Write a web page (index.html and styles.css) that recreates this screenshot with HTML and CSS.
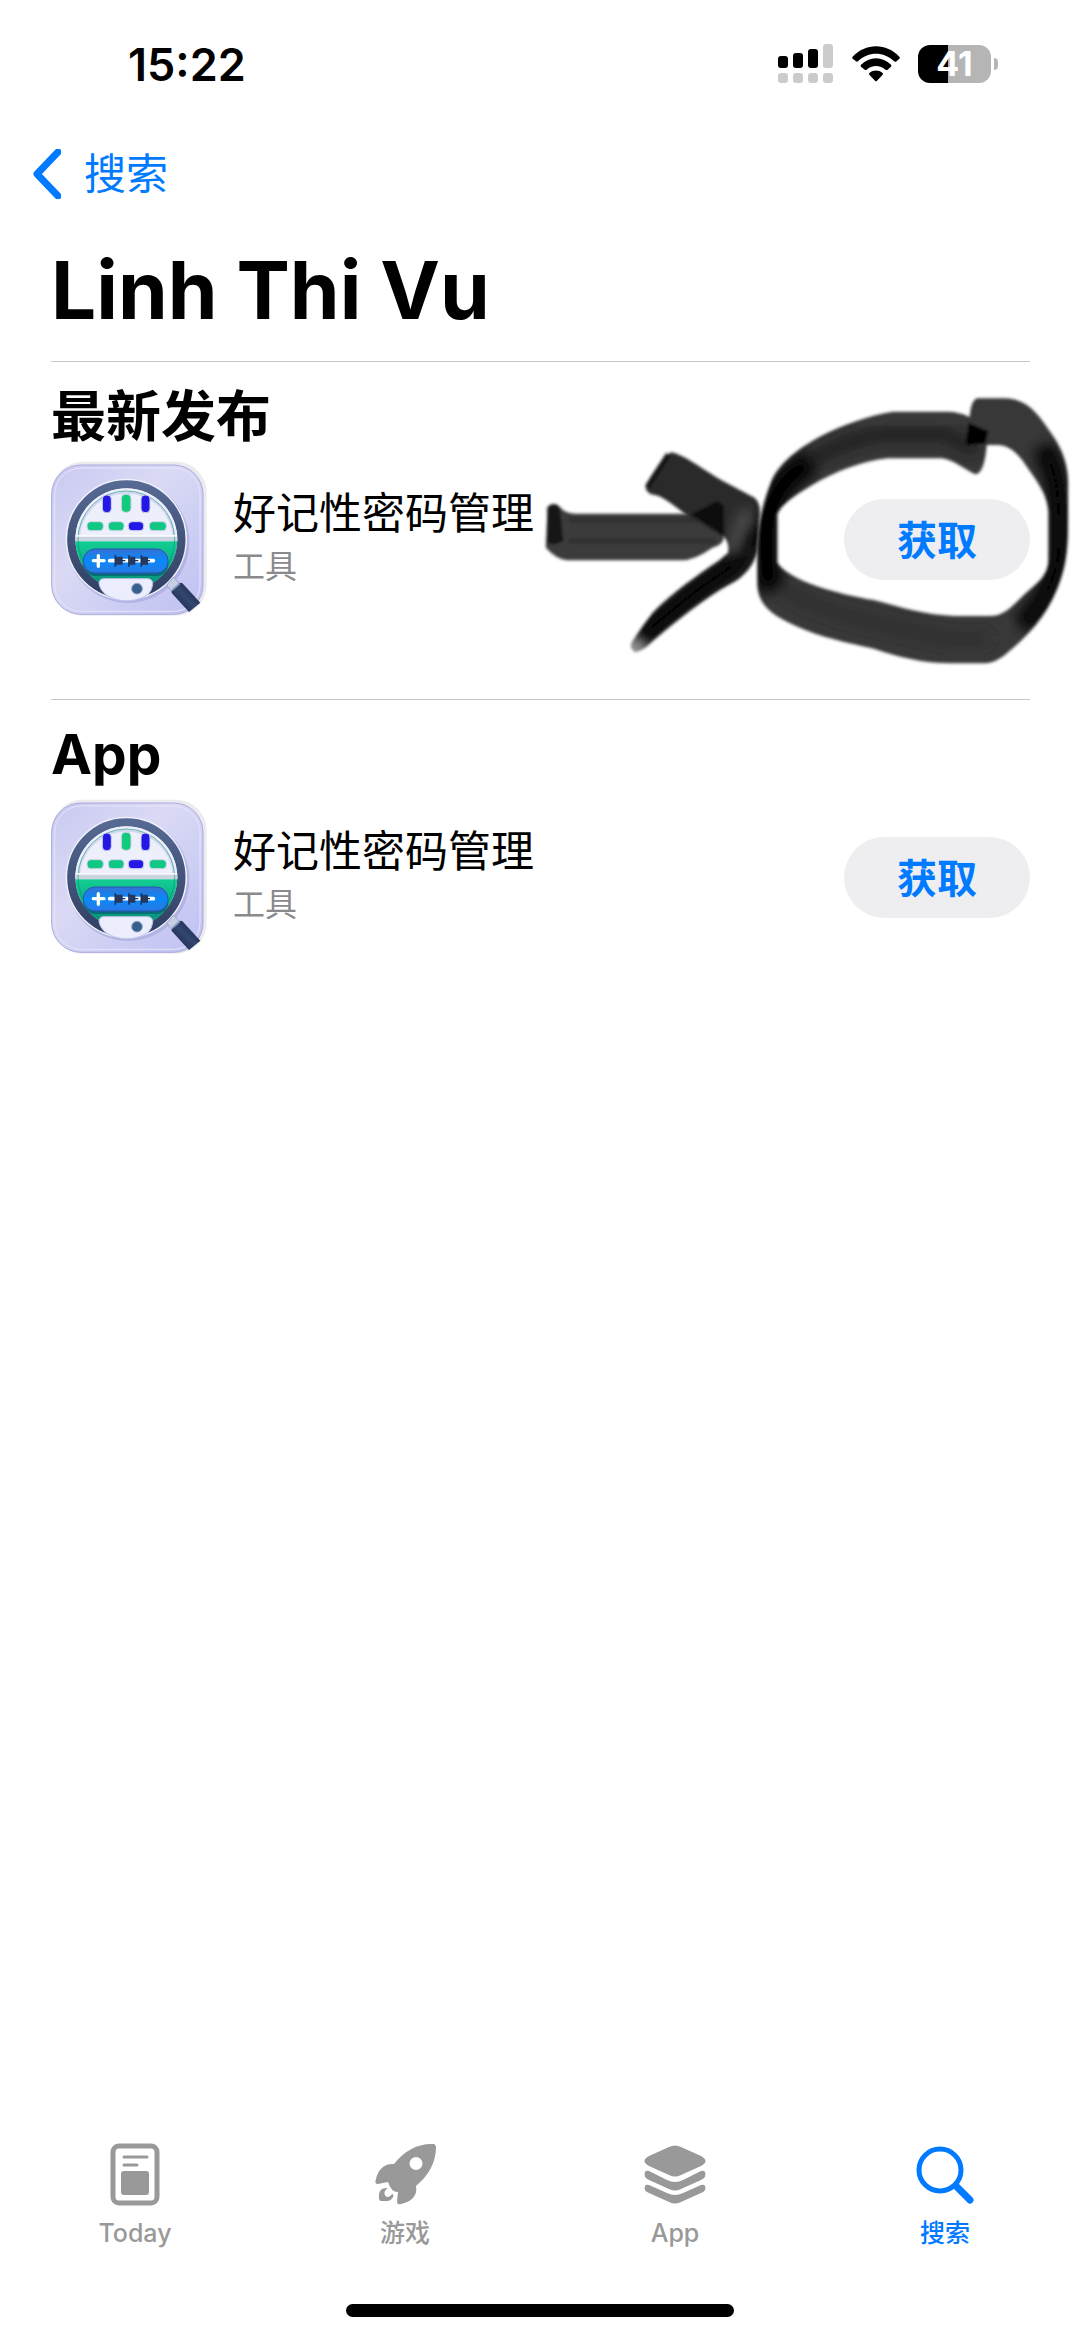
FILE: index.html
```html
<!DOCTYPE html>
<html lang="zh-CN">
<head>
    <meta charset="UTF-8">
    <meta name="viewport" content="width=device-width, initial-scale=1.0">
    <title>Linh Thi Vu</title>
    <link rel="stylesheet" href="styles.css">
</head>
<body>
    <!-- shared app icon -->
    <svg class="defs" width="0" height="0" aria-hidden="true">
        <defs>
            <linearGradient id="tile" x1="0" y1="0" x2="1" y2="1">
                <stop offset="0" stop-color="#c9c9f2"/>
                <stop offset="0.4" stop-color="#dadaf5"/>
                <stop offset="1" stop-color="#bfc0f2"/>
            </linearGradient>
            <linearGradient id="ring" x1="0" y1="0" x2="0" y2="1">
                <stop offset="0" stop-color="#566993"/>
                <stop offset="1" stop-color="#303f63"/>
            </linearGradient>
            <linearGradient id="green" x1="0" y1="0" x2="0" y2="1">
                <stop offset="0" stop-color="#12cf92"/>
                <stop offset="1" stop-color="#078577"/>
            </linearGradient>
            <linearGradient id="blue" x1="0" y1="0" x2="0" y2="1">
                <stop offset="0" stop-color="#3472d4"/>
                <stop offset="0.5" stop-color="#0989fa"/>
                <stop offset="1" stop-color="#2a78e4"/>
            </linearGradient>
            <linearGradient id="handle" x1="0" y1="1" x2="1" y2="0">
                <stop offset="0" stop-color="#131d3c"/>
                <stop offset="0.5" stop-color="#33466f"/>
                <stop offset="1" stop-color="#141e3e"/>
            </linearGradient>
            <clipPath id="lens"><circle cx="259" cy="271" r="153"/></clipPath>
        </defs>
        <symbol id="app-icon" viewBox="33 36 468 468">
            <rect x="36" y="38" width="464" height="462" rx="92" fill="#ecebef"/>
            <rect x="35" y="48" width="454" height="448" rx="88" fill="url(#tile)" stroke="#aaaade" stroke-width="3"/>
            <rect x="44" y="57" width="436" height="430" rx="80" fill="none" stroke="#e6e5fb" stroke-width="3"/>
            <circle cx="264" cy="278" r="184" fill="#8f90cf" opacity="0.4"/>
            <circle cx="259" cy="271" r="182" fill="#f1f1fc"/>
            <circle cx="259" cy="271" r="165" fill="#edf0fb" stroke="url(#ring)" stroke-width="25"/>
            <g clip-path="url(#lens)">
                <rect x="100" y="115" width="320" height="160" fill="#edeffb"/>
                <circle cx="259" cy="273" r="142" fill="none" stroke="#d3d7ef" stroke-width="6"/>
                <rect x="100" y="262" width="320" height="15" fill="#cbd5df"/>
                <rect x="100" y="277" width="320" height="155" fill="url(#green)"/>
                <circle cx="259" cy="271" r="145" fill="none" stroke="#0a8c7e" stroke-width="3" opacity="0.6"/>
                <rect x="100" y="258" width="320" height="5" fill="#f7f9ff"/>
                <rect x="129" y="305" width="256" height="76" rx="36" fill="#076d78"/>
            </g>
            <rect x="130" y="300" width="254" height="72" rx="35" fill="url(#blue)" stroke="#2657b5" stroke-width="3"/>
            <g stroke="#d3d4ed" stroke-width="3">
                <rect x="187" y="138" width="27" height="53" rx="12" fill="#2419e4"/>
                <rect x="244" y="136" width="29" height="54" rx="12" fill="#10cb7c"/>
                <rect x="303" y="138" width="27" height="53" rx="12" fill="#2419e4"/>
                <rect x="141" y="218" width="49" height="27" rx="11" fill="#10c884"/>
                <rect x="205" y="218" width="47" height="27" rx="11" fill="#10c884"/>
                <rect x="265" y="218" width="46" height="27" rx="11" fill="#2318e5"/>
                <rect x="328" y="218" width="51" height="27" rx="11" fill="#10c884"/>
            </g>
            <path d="M175 320v32M160 335h32" stroke="#fff" stroke-width="10" stroke-linecap="round"/>
            <path d="M209 335h131" stroke="#fff" stroke-width="11" stroke-linecap="round"/>
            <path d="M226 319v34M267 319v34M304 319v34" stroke="#173264" stroke-width="5"/>
            <path d="M227 323h21v24h-21zM268 323h18v24h-18zM305 323h19v24h-19z" fill="#26395c"/>
            <path d="M243 335h13M282 335h13M320 335h10" stroke="#173264" stroke-width="4"/>
            <path d="M190 389H325Q339 391 338 407Q336 423 326 434C287 463 229 462 193 433Q179 419 177 404Q177 390 190 389Z" fill="#eceefd" stroke="#bdc4e6" stroke-width="3"/>
            <circle cx="291" cy="419" r="16" fill="#38608d" stroke="#8ba0cc" stroke-width="3"/>
            <path d="M380 408L401 384L421 407L397 430Z" fill="#c7cde2" stroke="#98a5c8" stroke-width="3"/>
            <path d="M395 427L418 403Q424 399 430 406L481 461Q464 475 447 489L395 432Z" fill="url(#handle)"/>
            <path d="M397 423L419 404" stroke="#8598bf" stroke-width="5"/>
        </symbol>
    </svg>

    <header class="status-bar">
        <time class="clock">15:22</time>
        <div class="status-icons">
            <svg class="signal" viewBox="0 0 56 40" aria-hidden="true">
                <g fill="#000">
                    <rect x="0" y="12" width="10" height="12" rx="3"/>
                    <rect x="15" y="9" width="10" height="15" rx="3"/>
                    <rect x="30" y="5" width="10" height="19" rx="3"/>
                </g>
                <g fill="#cbcbcb">
                    <rect x="45" y="0" width="10" height="24" rx="3"/>
                    <rect x="0" y="29" width="10" height="10" rx="3"/>
                    <rect x="15" y="29" width="10" height="10" rx="3"/>
                    <rect x="30" y="29" width="10" height="10" rx="3"/>
                    <rect x="45" y="29" width="10" height="10" rx="3"/>
                </g>
            </svg>
            <svg class="wifi" viewBox="0 0 144 108" aria-hidden="true">
                <path d="M2 32C40-10 104-10 142 32Q145 35 142 38L132 47Q129 48 126 46C96 16 48 16 18 46Q15 48 12 46L2 38Q-1 35 2 32Z"/>
                <path d="M27 56C52 30 92 30 117 56Q120 60 117 62L106 72Q103 73 100 71C84 56 60 56 44 71Q41 73 38 71L27 62Q24 60 27 56Z"/>
                <path d="M53 80C64 71 80 71 91 80Q95 83 92 86L75 104Q72 107 69 104L52 86Q49 83 53 80Z"/>
            </svg>
            <div class="battery"><span class="battery-level">41</span></div>
        </div>
    </header>

    <nav class="nav">
        <a class="back" href="#search">
            <svg class="chevron" viewBox="0 0 28 50" aria-hidden="true">
                <path d="M25 3L4 25L25 47"/>
            </svg>
            搜索
        </a>
    </nav>

    <main class="content">
        <h1>Linh Thi Vu</h1>

        <section class="section">
            <h2>最新发布</h2>
            <div class="app-row">
                <svg class="app-icon" aria-hidden="true"><use href="#app-icon"/></svg>
                <div class="app-info">
                    <h3>好记性密码管理</h3>
                    <p>工具</p>
                </div>
                <button class="get-btn">获取</button>
            </div>

            <!-- marker drawing: arrow and circle round the button -->
            <svg class="marker" viewBox="0 0 1568 900" preserveAspectRatio="none" aria-hidden="true">
                <defs>
                    <filter id="soft"><feGaussianBlur stdDeviation="5"/></filter>
                    <filter id="softer" x="-30%" y="-30%" width="160%" height="160%"><feGaussianBlur stdDeviation="20"/></filter>
                    <path id="loop" d="M1307 150C1270 110 1230 92 1190 92H1035C960 105 890 132 830 165C760 205 705 250 685 310C660 380 648 440 648 520V610C650 680 700 712 800 753C870 780 950 795 980 803C1050 827 1120 847 1200 847H1290C1335 847 1355 820 1400 779C1460 720 1500 650 1520 570C1533 520 1534 470 1534 400V300C1533 240 1510 190 1480 148C1440 85 1410 52 1350 52H1275C1255 60 1255 100 1252 125L1245 192H1330C1375 192 1400 230 1425 270C1455 315 1478 350 1478 400V540C1475 590 1440 610 1410 640C1370 680 1350 705 1310 705H1210C1130 702 1060 680 980 657C880 640 740 600 705 545V400C715 370 760 340 800 315C870 270 950 240 1020 232H1175C1215 240 1240 267 1270 280C1300 276 1300 200 1307 150Z"/>
                    <path id="head" d="M401 214C440 220 490 265 550 300L640 350Q656 365 656 395L648 510C640 550 610 590 570 610C500 650 430 710 350 780Q320 812 300 812Q285 805 290 785Q310 750 350 695C400 640 480 580 540 538L565 515Q570 485 550 465L460 412C415 380 380 342 345 340Q328 330 330 316Q355 260 401 214Z"/>
                    <clipPath id="loop-clip"><use href="#loop"/></clipPath>
                    <clipPath id="head-clip"><use href="#head"/></clipPath>
                </defs>
                <g filter="url(#soft)">
                    <path d="M50 378Q68 360 85 378Q100 398 130 398H553V470Q550 492 520 500Q470 538 430 538H105Q75 534 45 500Z" fill="#3b3b3b"/>
                    <path d="M50 378Q68 360 85 378L95 480Q75 495 48 486Z" fill="#181818"/>
                    <path d="M110 418H480M110 480H530" stroke="#333" stroke-width="18"/>
                </g>
                <g filter="url(#soft)">
                    <use href="#head" fill="#292929"/>
                    <g clip-path="url(#head-clip)">
                        <path d="M640 440L590 545L480 625L350 735L310 780" fill="none" stroke="#000" stroke-width="55" filter="url(#softer)"/>
                        <path d="M620 390L575 520" stroke="#555" stroke-width="36" filter="url(#softer)"/>
                        <path d="M270 830L285 755L350 815Z" fill="#fff" opacity="0.7" filter="url(#softer)"/>
                    </g>
                    <path d="M458 400L535 360L553 375V465Z" fill="#080808"/>
                    <path d="M395 220L335 318" stroke="#141414" stroke-width="16"/>
                </g>
                <g filter="url(#soft)">
                    <use href="#loop" fill="#383838"/>
                    <g clip-path="url(#loop-clip)">
                        <path d="M800 240C880 190 960 162 1020 158H1180L1275 210" fill="none" stroke="#1c1c1c" stroke-width="40" filter="url(#softer)"/>
                        <path d="M720 620C810 690 950 720 1200 775H1310" fill="none" stroke="#2c2c2c" stroke-width="30" filter="url(#softer)"/>
                        <path d="M800 240C740 280 690 330 675 430V550Q675 590 690 625" fill="none" stroke="#000" stroke-width="76" filter="url(#softer)"/>
                        <path d="M1460 200C1500 260 1505 320 1508 400V520C1490 630 1440 700 1400 730" fill="none" stroke="#000" stroke-width="60" filter="url(#softer)"/>
                    </g>
                    <path d="M1250 125L1307 150L1298 188L1242 192Z" fill="#050505"/>
                </g>
            </svg>
        </section>

        <section class="section">
            <h2>App</h2>
            <div class="app-row">
                <svg class="app-icon" aria-hidden="true"><use href="#app-icon"/></svg>
                <div class="app-info">
                    <h3>好记性密码管理</h3>
                    <p>工具</p>
                </div>
                <button class="get-btn">获取</button>
            </div>
        </section>
    </main>

    <footer class="tab-bar">
        <nav class="tabs">
            <a class="tab" href="#today">
                <svg viewBox="0 0 64 64" aria-hidden="true">
                    <rect x="10" y="3" width="44" height="57" rx="6" fill="none" stroke="currentColor" stroke-width="5"/>
                    <path d="M21 14h23M21 22h13" stroke="currentColor" stroke-width="3" stroke-linecap="round"/>
                    <rect x="18" y="28" width="28" height="24" rx="3"/>
                </svg>
                <span>Today</span>
            </a>
            <a class="tab" href="#games">
                <svg viewBox="0 0 64 64" aria-hidden="true">
                    <path fill-rule="evenodd" d="M61 1Q63 2 63 4C63 20 55 33 43 43C45 53 38 59 28 61Q24 62 24 59L25 49Q18 49 15 39L5 41Q1 41 3 36C5 27 11 20 21 21C31 8 45 0 61 1ZM43 14a6 6 0 1 0 0 13a6 6 0 1 0 0-13Z"/>
                    <path d="M14 46C10 48 11 54 15 54Q17 54 19 51Q21 51 20 54Q18 58 14 58H8Q6 58 6 55V51Q7 45 13 45Q15 45 14 46Z"/>
                </svg>
                <span>游戏</span>
            </a>
            <a class="tab" href="#apps">
                <svg viewBox="0 0 64 64" aria-hidden="true">
                    <path d="M26 4Q32 1 38 4L58 13Q67 18 58 23L38 32Q32 35 26 32L6 23Q-3 18 6 13Z"/>
                    <path d="M2 29Q3 27 6 28L24 37Q32 41 40 37L58 28Q61 27 62 29Q64 34 58 37L38 46Q32 49 26 46L6 37Q0 34 2 29Z"/>
                    <path d="M2 43Q3 41 6 42L24 50Q32 54 40 50L58 42Q61 41 62 43Q64 48 58 50L38 59Q32 62 26 59L6 50Q0 48 2 43Z"/>
                </svg>
                <span>App</span>
            </a>
            <a class="tab active" href="#search">
                <svg viewBox="0 0 64 64" aria-hidden="true">
                    <circle cx="27" cy="27" r="21" fill="none" stroke="currentColor" stroke-width="5"/>
                    <path d="M43 43L57 57" stroke="currentColor" stroke-width="7" stroke-linecap="round"/>
                </svg>
                <span>搜索</span>
            </a>
        </nav>
        <div class="home-indicator"></div>
    </footer>
</body>
</html>
```
FILE: styles.css
```css
* {
    box-sizing: border-box;
    margin: 0;
    padding: 0;
}

body {
    display: flex;
    flex-direction: column;
    min-height: 100vh;
    font-family: "Inter", "Noto Sans CJK SC", sans-serif;
    background: #fff;
    color: #000;
}

a {
    color: #007aff;
    text-decoration: none;
}

.defs {
    position: absolute;
}

/* status bar */
.status-bar {
    display: flex;
    align-items: center;
    justify-content: space-between;
    height: 128px;
    padding: 0 82px 0 128px;
}

.clock {
    font-size: 45px;
    font-weight: 600;
}

.status-icons {
    display: flex;
    align-items: center;
    gap: 18px;
}

.signal {
    width: 56px;
    height: 40px;
}

.wifi {
    width: 48px;
    height: 36px;
}

.battery {
    display: flex;
    align-items: center;
    gap: 3px;
}

.battery::after {
    content: "";
    width: 4px;
    height: 12px;
    border-radius: 0 4px 4px 0;
    background: #b5b5b5;
}

.battery-level {
    width: 73px;
    border-radius: 12px;
    background: linear-gradient(to right, #000 41%, #b5b5b5 41%);
    color: #fff;
    font-size: 34px;
    font-weight: 700;
    line-height: 38px;
    text-align: center;
}

/* back link */
.nav {
    padding: 0 33px;
}

.back {
    display: inline-flex;
    align-items: center;
    gap: 23px;
    font-size: 42px;
    line-height: 92px;
}

.chevron {
    width: 28px;
    height: 50px;
    fill: none;
    stroke: #007aff;
    stroke-width: 7;
    stroke-linecap: round;
    stroke-linejoin: round;
}

.content {
    flex: 1;
    padding: 20px 50px 0 51px;
}

h1 {
    margin-bottom: 21px;
    font-size: 80px;
    font-weight: 700;
    line-height: 100px;
}

.section {
    position: relative;
    padding: 22px 0 82px;
    border-top: 1px solid #c8c8c8;
}

h2 {
    margin-bottom: 13px;
    font-size: 55px;
    font-weight: 700;
    line-height: 64px;
}

.app-row {
    display: flex;
    align-items: center;
}

.app-icon {
    width: 156px;
    height: 156px;
}

.app-info {
    flex: 1;
    padding: 0 0 5px 26px;
}

h3 {
    font-size: 43px;
    font-weight: 400;
    line-height: 60px;
}

.app-info p {
    color: #8a8a8e;
    font-size: 32px;
    line-height: 48px;
}

.get-btn {
    width: 186px;
    height: 81px;
    padding-bottom: 3px;
    border: none;
    border-radius: 41px;
    background: #eeeef0;
    color: #007aff;
    font-family: inherit;
    font-size: 40px;
    font-weight: 700;
    cursor: pointer;
}

.marker {
    position: absolute;
    top: 19px;
    right: -50px;
    width: 550px;
    height: 300px;
    pointer-events: none;
}

/* bottom tabs */
.tabs {
    display: grid;
    grid-template-columns: repeat(4, 1fr);
}

.tab {
    display: flex;
    flex-direction: column;
    align-items: center;
    gap: 8px;
    color: #999;
    font-size: 25px;
    font-weight: 500;
    line-height: 36px;
}

.tab.active {
    color: #007aff;
}

.tab svg {
    width: 64px;
    height: 64px;
    fill: currentColor;
}

.home-indicator {
    width: 36%;
    height: 13px;
    margin: 53px auto 20px;
    border-radius: 7px;
    background: #000;
}
```
